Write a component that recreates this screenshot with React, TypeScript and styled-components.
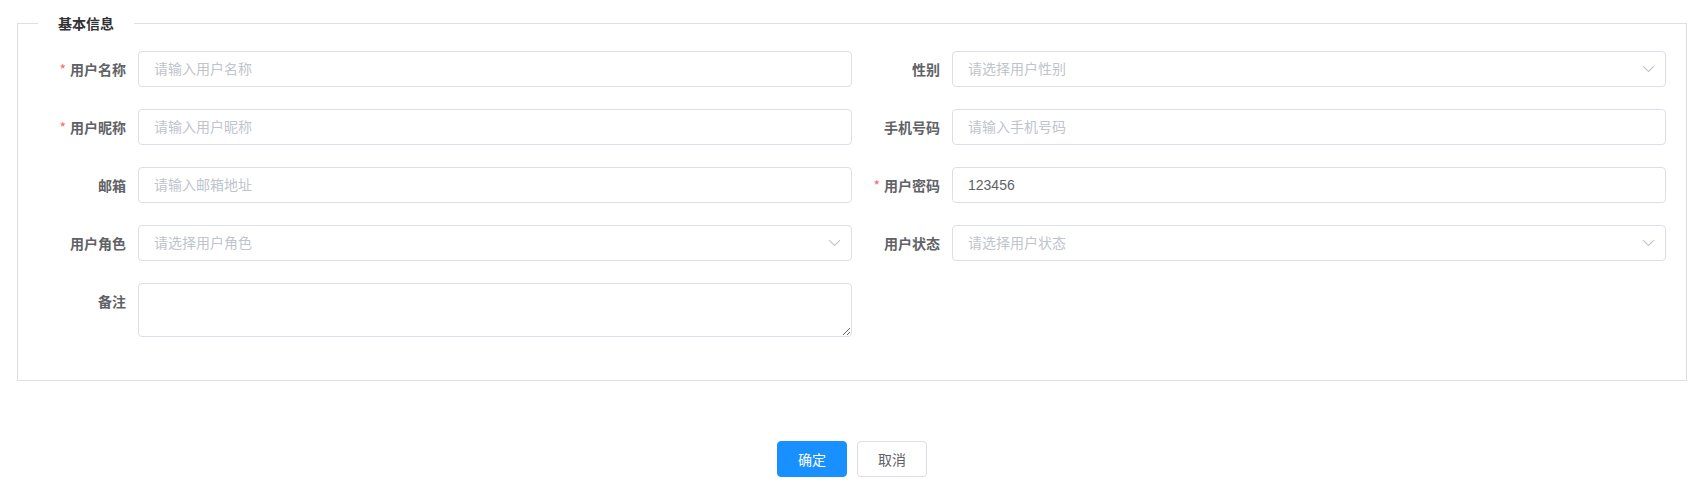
import React from 'react';
import styled, { createGlobalStyle } from 'styled-components';

const GlobalStyle = createGlobalStyle`
  html, body {
    margin: 0;
    padding: 0;
    background: #fff;
  }
  body {
    font-family: "Noto Sans CJK SC", "Liberation Sans", sans-serif;
    font-size: 14px;
    color: #606266;
  }
`;

const Page = styled.div`
  padding: 13px 12px 0 17px;
`;

const FieldSet = styled.fieldset`
  margin: 0;
  padding: 18px 20px 21px 20px;
  border: 1px solid #dcdfe6;
  min-width: 0;
`;

const Legend = styled.legend`
  padding: 0 20px;
  font-size: 14px;
  line-height: 20px;
  font-weight: 700;
  color: #303133;
`;

const FormGrid = styled.div`
  display: grid;
  grid-template-columns: 1fr 1fr;
  row-gap: 22px;
  padding-bottom: 22px;
`;

const FormItem = styled.div`
  display: flex;
  align-items: flex-start;
`;

const Label = styled.label`
  flex: 0 0 100px;
  box-sizing: border-box;
  padding-right: 12px;
  text-align: right;
  line-height: 36px;
  font-size: 14px;
  font-weight: 700;
  color: #606266;
  white-space: nowrap;
`;

const Star = styled.span`
  color: #f56c6c;
  margin-right: 4px;
  font-weight: 400;
`;

const Control = styled.div`
  flex: 1;
  position: relative;
  min-width: 0;
`;

const Input = styled.input<{ $select?: boolean }>`
  box-sizing: border-box;
  display: block;
  width: 100%;
  height: 36px;
  padding: 0 ${(p) => (p.$select ? '30px' : '15px')} 0 15px;
  border: 1px solid #dcdfe6;
  border-radius: 4px;
  font-family: "Liberation Sans", "Noto Sans CJK SC", sans-serif;
  font-size: 14px;
  color: #606266;
  background: #fff;
  outline: none;
  cursor: ${(p) => (p.$select ? 'pointer' : 'text')};

  &::placeholder {
    color: #c0c4cc;
    font-family: "Noto Sans CJK SC", sans-serif;
  }
`;

const TextArea = styled.textarea`
  box-sizing: border-box;
  display: block;
  width: 100%;
  height: 54px;
  padding: 5px 15px;
  border: 1px solid #dcdfe6;
  border-radius: 4px;
  font-family: "Noto Sans CJK SC", sans-serif;
  font-size: 14px;
  line-height: 1.5;
  color: #606266;
  outline: none;
  resize: vertical;
`;

const Arrow = styled.span`
  position: absolute;
  top: 0;
  right: 5px;
  width: 25px;
  height: 36px;
  display: flex;
  align-items: center;
  justify-content: center;
  pointer-events: none;
`;

const Footer = styled.div`
  display: flex;
  justify-content: center;
  gap: 10px;
  margin-top: 60px;
`;

const Button = styled.button<{ $primary?: boolean }>`
  box-sizing: border-box;
  height: 36px;
  padding: 0 20px;
  border-radius: 4px;
  border: 1px solid ${(p) => (p.$primary ? '#1890ff' : '#dcdfe6')};
  background: ${(p) => (p.$primary ? '#1890ff' : '#fff')};
  color: ${(p) => (p.$primary ? '#fff' : '#606266')};
  font-family: "Noto Sans CJK SC", sans-serif;
  font-size: 14px;
  cursor: pointer;
`;

const ChevronDown = () => (
  <svg width="13" height="8" viewBox="0 0 13 8" fill="none">
    <path d="M1 1.2 L6.5 6.5 L12 1.2" stroke="#c0c4cc" strokeWidth="1.1" />
  </svg>
);

type Field = {
  label: string;
  required?: boolean;
  placeholder?: string;
  value?: string;
  kind?: 'input' | 'select' | 'textarea';
};

const fields: (Field | null)[] = [
  { label: '用户名称', required: true, placeholder: '请输入用户名称' },
  { label: '性别', placeholder: '请选择用户性别', kind: 'select' },
  { label: '用户昵称', required: true, placeholder: '请输入用户昵称' },
  { label: '手机号码', placeholder: '请输入手机号码' },
  { label: '邮箱', placeholder: '请输入邮箱地址' },
  { label: '用户密码', required: true, value: '123456' },
  { label: '用户角色', placeholder: '请选择用户角色', kind: 'select' },
  { label: '用户状态', placeholder: '请选择用户状态', kind: 'select' },
  { label: '备注', kind: 'textarea' },
  null,
];

const renderControl = (f: Field) => {
  if (f.kind === 'textarea') return <TextArea />;
  if (f.kind === 'select')
    return (
      <>
        <Input $select readOnly placeholder={f.placeholder} />
        <Arrow>
          <ChevronDown />
        </Arrow>
      </>
    );
  return <Input placeholder={f.placeholder} defaultValue={f.value} />;
};

const App = (): JSX.Element => (
  <Page>
    <GlobalStyle />
    <FieldSet>
      <Legend>基本信息</Legend>
      <FormGrid>
        {fields.map((f, i) =>
          f ? (
            <FormItem key={f.label}>
              <Label>
                {f.required && <Star>*</Star>}
                {f.label}
              </Label>
              <Control>{renderControl(f)}</Control>
            </FormItem>
          ) : (
            <div key={`empty-${i}`} />
          ),
        )}
      </FormGrid>
    </FieldSet>
    <Footer>
      <Button $primary>确定</Button>
      <Button>取消</Button>
    </Footer>
  </Page>
);

export default App;
